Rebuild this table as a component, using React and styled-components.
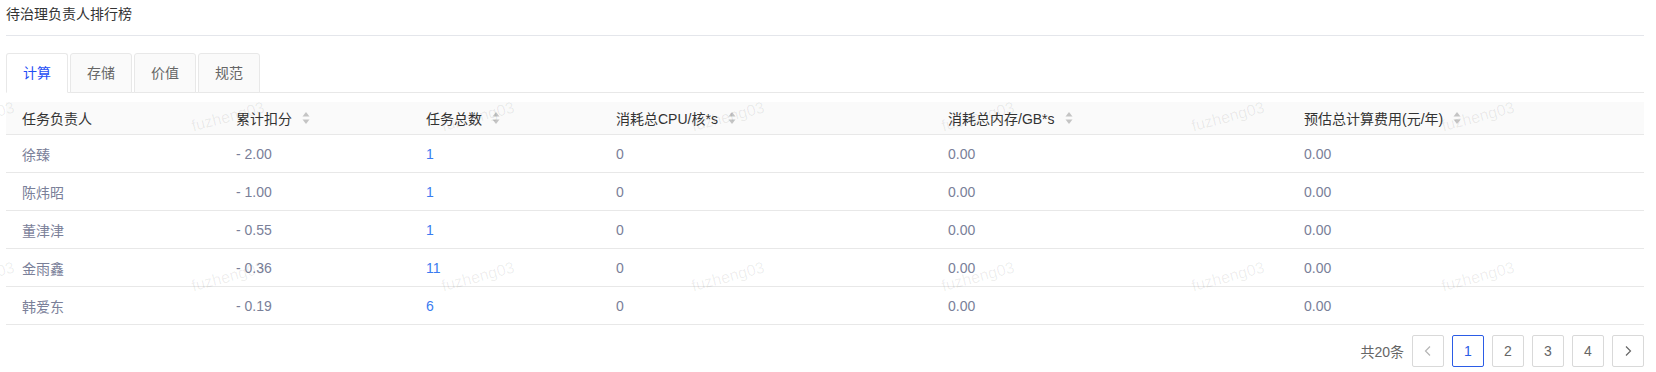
import React, { useState } from "react";
import styled, { createGlobalStyle } from "styled-components";

const GlobalStyle = createGlobalStyle`
  html, body {
    margin: 0;
    padding: 0;
    background: #ffffff;
  }
  body {
    font-family: "Liberation Sans", "Noto Sans CJK SC", sans-serif;
    font-size: 14px;
    color: #333;
  }
`;

// Page wrapper (the watermark layer sits over it)
const Page = styled.div`
  position: relative;
  overflow: hidden;
  padding: 0 12px 0 6px;
  height: 372px;
  box-sizing: border-box;
`;

const Title = styled.div`
  padding: 3px 0 10px;
  line-height: 22px;
  font-size: 14px;
  color: #333;
  border-bottom: 1px solid #e4e6eb;
`;

// Tabs
const TabBar = styled.div`
  display: flex;
  gap: 2px;
  margin-top: 17px;
  border-bottom: 1px solid #e8e8e8;
`;

const Tab = styled.button`
  width: 62px;
  height: 40px;
  margin-bottom: -1px;
  padding: 0;
  box-sizing: border-box;
  border: 1px solid #e8e8e8;
  border-bottom-color: ${(p) => (p.$active ? "#ffffff" : "#e8e8e8")};
  border-radius: 3px 3px 0 0;
  background: ${(p) => (p.$active ? "#ffffff" : "#fafafa")};
  color: ${(p) => (p.$active ? "#1f4ff5" : "#666")};
  font-family: inherit;
  font-size: 14px;
  line-height: 38px;
  cursor: pointer;

  &:focus {
    outline: none;
  }
`;

// Table
const Table = styled.table`
  width: 100%;
  margin-top: 9px;
  border-collapse: collapse;
  table-layout: fixed;
`;

const HeadCell = styled.th`
  height: 32px;
  padding: 0 16px;
  background: #fafafa;
  border-bottom: 1px solid #e8e8e8;
  text-align: left;
  font-weight: 400;
  font-size: 14px;
  color: #333;
  white-space: nowrap;
`;

const HeadInner = styled.span`
  display: inline-flex;
  align-items: center;
`;

const SortIcon = styled.svg`
  margin-left: 10px;
  flex: none;
`;

const Cell = styled.td`
  height: 37px;
  padding: 0 16px;
  border-bottom: 1px solid #e8e8e8;
  font-size: 14px;
  color: ${(p) => (p.$link ? "#3b7cf0" : "#7a8099")};
  white-space: nowrap;
`;

// Pagination
const Pager = styled.div`
  display: flex;
  justify-content: flex-end;
  align-items: center;
  gap: 8px;
  margin-top: 10px;
`;

const Total = styled.span`
  font-size: 14px;
  color: #666;
  margin-right: 0;
`;

const PageButton = styled.button`
  width: 32px;
  height: 32px;
  padding: 0;
  box-sizing: border-box;
  display: flex;
  align-items: center;
  justify-content: center;
  border: 1px solid ${(p) => (p.$active ? "#2b5ce6" : "#d9d9d9")};
  border-radius: 2px;
  background: #fff;
  color: ${(p) => (p.$active ? "#2b5ce6" : "#666")};
  font-family: inherit;
  font-size: 14px;
  cursor: pointer;

  &:focus {
    outline: none;
  }
`;

// Watermark overlay
const Watermark = styled.div`
  position: absolute;
  left: -147px;
  top: 37px;
  display: grid;
  grid-template-columns: repeat(8, 250px);
  grid-auto-rows: 160px;
  pointer-events: none;
`;

const Mark = styled.span`
  display: flex;
  align-items: center;
  justify-content: center;
  font-family: "Liberation Sans", sans-serif;
  font-size: 16px;
  color: rgba(0, 0, 0, 0.07);
  transform: rotate(-15deg);
  user-select: none;
`;

const columns = [
  { title: "任务负责人", width: 214 },
  { title: "累计扣分", width: 190, sort: true },
  { title: "任务总数", width: 190, sort: true },
  { title: "消耗总CPU/核*s", width: 332, sort: true },
  { title: "消耗总内存/GB*s", width: 356, sort: true },
  { title: "预估总计算费用(元/年)", width: 356, sort: true },
];

const rows = [
  ["徐臻", "- 2.00", "1", "0", "0.00", "0.00"],
  ["陈炜昭", "- 1.00", "1", "0", "0.00", "0.00"],
  ["董津津", "- 0.55", "1", "0", "0.00", "0.00"],
  ["金雨鑫", "- 0.36", "11", "0", "0.00", "0.00"],
  ["韩爱东", "- 0.19", "6", "0", "0.00", "0.00"],
];

const tabs = ["计算", "存储", "价值", "规范"];

const Sorter = () => (
  <SortIcon width="8" height="14" viewBox="0 0 8 14">
    <path d="M4 1 L7.5 5.5 H0.5 Z" fill="#c4c4c4" />
    <path d="M4 13 L7.5 8.5 H0.5 Z" fill="#c4c4c4" />
  </SortIcon>
);

const Chevron = ({ dir, color }) => (
  <svg width="10" height="12" viewBox="0 0 10 12">
    <path
      d={dir === "left" ? "M7 1.5 L2.5 6 L7 10.5" : "M3 1.5 L7.5 6 L3 10.5"}
      fill="none"
      stroke={color}
      strokeWidth="1.2"
    />
  </svg>
);

export default function App() {
  const [active, setActive] = useState(0);
  const [page, setPage] = useState(1);

  return (
    <>
      <GlobalStyle />
      <Page>
        <Title>待治理负责人排行榜</Title>

        <TabBar>
          {tabs.map((t, i) => (
            <Tab key={t} $active={i === active} onClick={() => setActive(i)}>
              {t}
            </Tab>
          ))}
        </TabBar>

        <Table>
          <colgroup>
            {columns.map((c) => (
              <col key={c.title} style={{ width: c.width }} />
            ))}
          </colgroup>
          <thead>
            <tr>
              {columns.map((c) => (
                <HeadCell key={c.title}>
                  <HeadInner>
                    {c.title}
                    {c.sort && <Sorter />}
                  </HeadInner>
                </HeadCell>
              ))}
            </tr>
          </thead>
          <tbody>
            {rows.map((r) => (
              <tr key={r[0]}>
                {r.map((v, j) => (
                  <Cell key={j} $link={j === 2}>
                    {v}
                  </Cell>
                ))}
              </tr>
            ))}
          </tbody>
        </Table>

        <Pager>
          <Total>共20条</Total>
          <PageButton>
            <Chevron dir="left" color="#b5b5b5" />
          </PageButton>
          {[1, 2, 3, 4].map((n) => (
            <PageButton key={n} $active={n === page} onClick={() => setPage(n)}>
              {n}
            </PageButton>
          ))}
          <PageButton>
            <Chevron dir="right" color="#666" />
          </PageButton>
        </Pager>

        <Watermark>
          {Array.from({ length: 16 }).map((_, i) => (
            <Mark key={i}>fuzheng03</Mark>
          ))}
        </Watermark>
      </Page>
    </>
  );
}
